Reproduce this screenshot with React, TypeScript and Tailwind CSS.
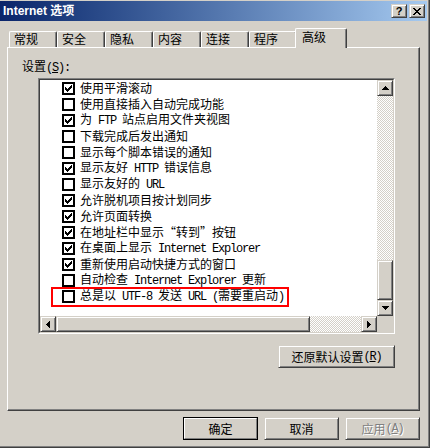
import React from "react";

const mono = "font-['Liberation_Mono',monospace] text-[12px] tracking-[-1.2px] whitespace-pre";

const rows: { on: boolean; text: string }[] = [
  { on: true, text: "使用平滑滚动" },
  { on: false, text: "使用直接插入自动完成功能" },
  { on: true, text: "为 FTP 站点启用文件夹视图" },
  { on: false, text: "下载完成后发出通知" },
  { on: false, text: "显示每个脚本错误的通知" },
  { on: true, text: "显示友好 HTTP 错误信息" },
  { on: false, text: "显示友好的 URL" },
  { on: true, text: "允许脱机项目按计划同步" },
  { on: true, text: "允许页面转换" },
  { on: true, text: "在地址栏中显示“转到”按钮" },
  { on: true, text: "在桌面上显示 Internet Explorer" },
  { on: true, text: "重新使用启动快捷方式的窗口" },
  { on: false, text: "自动检查 Internet Explorer 更新" },
  { on: false, text: "总是以 UTF-8 发送 URL (需要重启动)" },
];

const tabs = ["常规", "安全", "隐私", "内容", "连接", "程序"];

// SimSun-like text: half-width latin runs, full-width quotes
const Label: React.FC<{ text: string }> = ({ text }) => {
  const parts = text.match(/[\x20-\x7e]+|“|”|[^\x20-\x7e“”]+/g) ?? [];
  return (
    <>
      {parts.map((p, i) => {
        if (p === "“") return <span key={i} className="inline-block w-[12px] text-right">“</span>;
        if (p === "”") return <span key={i} className="inline-block w-[12px] text-left">”</span>;
        if (/^[\x20-\x7e]+$/.test(p)) return <span key={i} className={mono}>{p}</span>;
        return <span key={i}>{p}</span>;
      })}
    </>
  );
};

const Check: React.FC<{ on: boolean }> = ({ on }) => (
  <span className="w-[13px] h-[13px] border-2 border-black bg-white flex items-center justify-center shrink-0">
    {on && (
      <svg width="7" height="7" viewBox="0 0 7 7" shapeRendering="crispEdges">
        {[2, 3, 4, 3, 2, 1, 0].map((y, x) => (
          <rect key={x} x={x} y={y} width="1" height="3" fill="#000" />
        ))}
      </svg>
    )}
  </span>
);

const Arrow: React.FC<{ dir: "up" | "down" | "left" | "right" }> = ({ dir }) => {
  const steps = [0, 1, 2, 3];
  if (dir === "up" || dir === "down") {
    return (
      <svg width="7" height="4" viewBox="0 0 7 4" shapeRendering="crispEdges">
        {steps.map((s) => (
          <rect key={s} x={3 - s} y={dir === "up" ? s : 3 - s} width={s * 2 + 1} height="1" fill="#000" />
        ))}
      </svg>
    );
  }
  return (
    <svg width="4" height="7" viewBox="0 0 4 7" shapeRendering="crispEdges">
      {steps.map((s) => (
        <rect key={s} x={dir === "left" ? s : 3 - s} y={3 - s} width="1" height={s * 2 + 1} fill="#000" />
      ))}
    </svg>
  );
};

const raised =
  "bg-[#d4d0c8] border border-[#d4d0c8] border-b-[#404040] border-r-[#404040] shadow-[inset_1px_1px_#ffffff,inset_-1px_-1px_#808080]";
const checker =
  "bg-[image:repeating-conic-gradient(#d4d0c8_0%_25%,#ffffff_0%_50%)] bg-[length:2px_2px]";

export default function App() {
  return (
    <div className="w-[430px] h-[448px] bg-[#d4d0c8] flex flex-col border-r border-b border-[#404040] shadow-[inset_-1px_-1px_#808080] overflow-hidden font-['Noto_Sans_CJK_SC',sans-serif] text-[12px] text-black">
      {/* Title bar */}
      <div className="mt-px mr-[2px] h-[20px] flex items-center pl-[3px] pr-[2px] bg-linear-to-r from-[#0a246a] to-[#a6caf0]">
        <div className="flex-1 text-white font-bold text-[12px] leading-[20px] font-['Liberation_Sans','Noto_Sans_CJK_SC',sans-serif]">
          Internet 选项
        </div>
        <div className="flex gap-[2px]">
          <div className={`${raised} w-[16px] h-[14px] flex items-center justify-center`}>
            <span className="font-['Liberation_Sans',sans-serif] font-bold text-[11px] leading-[11px]">?</span>
          </div>
          <div className={`${raised} w-[16px] h-[14px] flex items-center justify-center`}>
            <svg width="8" height="7" viewBox="0 0 8 7" shapeRendering="crispEdges">
              {[0, 1, 2, 3, 4, 5, 6].map((y) => {
                const d = Math.min(y, 6 - y);
                return (
                  <g key={y}>
                    <rect x={d} y={y} width="2" height="1" fill="#000" />
                    <rect x={6 - d} y={y} width="2" height="1" fill="#000" />
                  </g>
                );
              })}
            </svg>
          </div>
        </div>
      </div>

      {/* Tabs */}
      <div className="mt-[7px] ml-[9px] h-[20px] -mb-px flex items-end relative z-10">
        {tabs.map((t) => (
          <div
            key={t}
            className="w-[48px] h-[16px] mb-px pl-[4px] leading-[14px] bg-[#d4d0c8] border-l border-t border-r border-white border-r-[#404040] rounded-t-[2px] shadow-[inset_-1px_0_#808080]"
          >
            {t}
          </div>
        ))}
        <div className="relative z-10 -mx-[2px] w-[52px] h-[20px] pl-[6px] pt-px leading-[14px] bg-[#d4d0c8] border-l border-t border-r border-white border-r-[#404040] rounded-t-[2px] shadow-[inset_-1px_0_#808080]">
          高级
        </div>
      </div>

      {/* Panel */}
      <div className="ml-[7px] w-[413px] h-[364px] flex flex-col border border-white border-r-[#404040] border-b-[#404040] shadow-[inset_-1px_-1px_#808080]">
        <div className="ml-[14px] mt-[10px] h-[16px] leading-[16px]">
          设置<span className={mono}>(<span className="underline">S</span>):</span>
        </div>

        {/* Settings list */}
        <div className="ml-[30px] mt-[4px] w-[357px] h-[256px] flex border border-[#808080] border-b-white border-r-white">
          <div className="flex-1 flex flex-col bg-white border border-[#404040] border-b-[#d4d0c8] border-r-[#d4d0c8]">
            <div className="h-[236px] flex">
              <div className="w-[337px] overflow-hidden">
                {rows.map((r, i) => (
                  <div key={i} className="h-[16px] flex items-center pl-[22px] relative">
                    <Check on={r.on} />
                    <span className="ml-[5px] leading-[16px] whitespace-nowrap">
                      <Label text={r.text} />
                    </span>
                    {i === rows.length - 1 && (
                      <div className="absolute left-[11px] top-[-1px] w-[238px] h-[20px] border-2 border-[#ff0000]" />
                    )}
                  </div>
                ))}
              </div>
              <div className="w-[16px] flex flex-col">
                <div className={`${raised} h-[16px] flex items-center justify-center`}>
                  <Arrow dir="up" />
                </div>
                <div className={`${checker} flex-1`} />
                <div className={`${raised} h-[40px]`} />
                <div className={`${raised} h-[16px] flex items-center justify-center`}>
                  <Arrow dir="down" />
                </div>
              </div>
            </div>
            <div className="h-[16px] flex">
              <div className={`${raised} w-[16px] flex items-center justify-center`}>
                <Arrow dir="left" />
              </div>
              <div className={`${raised} w-[254px]`} />
              <div className={`${checker} w-[51px]`} />
              <div className={`${raised} w-[16px] flex items-center justify-center`}>
                <Arrow dir="right" />
              </div>
              <div className="w-[16px] bg-[#d4d0c8]" />
            </div>
          </div>
        </div>

        <div className={`${raised} ml-[270px] mt-[11px] w-[117px] h-[23px] flex items-center justify-center`}>
          还原默认设置<span className={mono}>(<span className="underline">R</span>)</span>
        </div>
      </div>

      {/* Dialog buttons */}
      <div className="mt-[6px] ml-[183px] flex gap-[6px]">
        <div className="w-[75px] h-[23px] flex border border-black">
          <div className="flex-1 flex items-center justify-center bg-[#d4d0c8] border border-white border-b-[#808080] border-r-[#808080]">
            确定
          </div>
        </div>
        <div className={`${raised} w-[75px] h-[23px] flex items-center justify-center`}>取消</div>
        <div className={`${raised} w-[75px] h-[23px] flex items-center justify-center text-[#808080] [text-shadow:1px_1px_0_#ffffff]`}>
          应用<span className={mono}>(<span className="underline">A</span>)</span>
        </div>
      </div>
    </div>
  );
}
